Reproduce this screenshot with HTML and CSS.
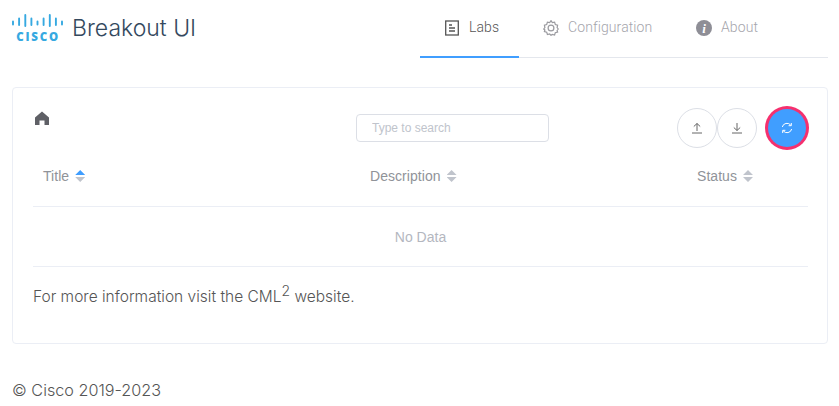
FILE: index.html
```html
<!DOCTYPE html>
<html lang="en">
<head>
    <meta charset="UTF-8">
    <title>Breakout UI</title>
    <link rel="stylesheet" href="styles.css">
</head>
<body>
    <header class="header">
        <div class="brand">
            <svg class="logo" viewBox="0 0 51 32" width="51" height="32">
                <path fill="none" stroke="#36a9e1" stroke-width="1.9" stroke-linecap="round" d="M1 7.500v3M7.100 4.500v6.500M13.300 1v11M19.400 4.500v6.500M25.500 7.500v3M31.600 4.500v6.500M37.800 1v11M43.900 4.500v6.500M50 7.500v3"/>
                <text x="26" y="26.500" class="logo-text" text-anchor="middle">CISCO</text>
            </svg>
            <span class="brand-name">Breakout UI</span>
        </div>
        <nav class="tabs">
            <a class="tab tab-active">
                <svg viewBox="0 0 16 16" width="16" height="16" fill="none" stroke="#555" stroke-width="1.3">
                    <rect x="1.700" y="1" width="12.600" height="14" />
                    <path d="M5 5h3M5 8h6M5 11h6"/>
                </svg>
                Labs
            </a>
            <a class="tab">
                <svg viewBox="0 0 16 16" width="16" height="16" fill="none" stroke="#9a9a9f" stroke-width="1.2">
                    <circle cx="8" cy="8" r="2.900"/>
                    <path d="M8 .7l1.300 2 2.300-.5.700 2.300 2.300.7-.5 2.300 1.200 1.500-1.200 1.500.5 1.500-2.300.7-.7 2.300-2.300-.5L8 15.300l-1.300-1.300-2.300.5-.7-2.300-2.300-.7.500-1.500L.7 9 1.900 7.500l-.5-2.300 2.300-.7.700-2.300 2.300.5z"/>
                </svg>
                Configuration
            </a>
            <a class="tab">
                <svg viewBox="0 0 16 16" width="16" height="16">
                    <circle cx="8" cy="8" r="8" fill="#8e8e96"/>
                    <text x="8" y="12.500" class="info-text" text-anchor="middle">i</text>
                </svg>
                About
            </a>
        </nav>
    </header>

    <main class="card">
        <div class="toolbar">
            <svg class="home" viewBox="0 0 16 14" width="16" height="14">
                <path fill="#5f6066" d="M8 .5 15 6.500V14h-4.500V9.500h-5V14H1V6.500z"/>
            </svg>
            <input class="search" type="text" placeholder="Type to search">
            <div class="actions">
                <button class="round-btn">
                    <svg viewBox="0 0 12 12" width="12" height="12" fill="none" stroke="#666" stroke-width="1">
                        <path d="M6 9V1.500M2.800 4.500 6 1.500l3.200 3M1 11h10"/>
                    </svg>
                </button>
                <button class="round-btn">
                    <svg viewBox="0 0 12 12" width="12" height="12" fill="none" stroke="#666" stroke-width="1">
                        <path d="M6 1v7.500M2.800 5.500 6 8.500l3.200-3M1 11h10"/>
                    </svg>
                </button>
                <button class="refresh-btn">
                    <svg viewBox="0 0 12 12" width="12" height="12" fill="none" stroke="#fff" stroke-width="1">
                        <path d="M1.300 5A4.800 4.800 0 0 1 9.800 3.200M10.700 7A4.800 4.800 0 0 1 2.200 8.800"/>
                        <path d="M10.300 1v2.700H7.600M1.700 11V8.300h2.700"/>
                    </svg>
                </button>
            </div>
        </div>

        <div class="table-head">
            <div class="th">Title <span class="sorter sorter-active"></span></div>
            <div class="th">Description <span class="sorter"></span></div>
            <div class="th">Status <span class="sorter"></span></div>
        </div>
        <div class="no-data">No Data</div>

        <p class="info">For more information visit the CML<sup>2</sup> website.</p>
    </main>

    <footer class="footer">© Cisco 2019-2023</footer>
</body>
</html>
```

FILE: styles.css
```css
body {
    margin: 0;
    padding: 0 11px 0 12px;
    font-family: "Inter", "Liberation Sans", sans-serif;
    font-weight: 300;
    background: #fff;
    color: #555;
}
.header {
    display: flex;
    justify-content: space-between;
    height: 58px;
}
.brand {
    display: flex;
    align-items: flex-start;
    gap: 9px;
    padding-top: 14px;
}
.logo-text {
    font-family: "Open Sans", "Liberation Sans", sans-serif;
    font-size: 11.500px;
    font-weight: 800;
    letter-spacing: 1.800px;
    fill: #36a9e1;
}
.info-text {
    font-family: "Liberation Serif", serif;
    font-size: 13px;
    font-weight: 700;
    font-style: italic;
    fill: #fff;
}
.brand-name {
    font-size: 23px;
    line-height: 28px;
    color: #34495e;
}
.tabs {
    display: flex;
    width: 408px;
    border-bottom: 1px solid #e4e7ed;
    box-sizing: border-box;
}
.tab {
    display: flex;
    align-items: flex-start;
    gap: 9px;
    box-sizing: border-box;
    width: 99px;
    height: 58px;
    padding: 19px 0 0 24px;
    font-family: "Roboto", sans-serif;
    font-size: 14px;
    letter-spacing: .1px;
    line-height: 17px;
    color: #a5a5ac;
    white-space: nowrap;
}
.tab svg {
    margin-top: 1px;
}
.tab-active {
    color: #555;
    border-bottom: 2px solid #409eff;
}
.tab:nth-child(2) {
    width: 153px;
}
.card {
    margin-top: 29px;
    height: 257px;
    box-sizing: border-box;
    padding: 20px 19px 0 20px;
    border: 1px solid #ebeef5;
    border-radius: 4px;
}
.toolbar {
    display: grid;
    grid-template-columns: 323px 193px 1fr;
    height: 40px;
}
.home {
    margin: 3px 0 0 1px;
}
.search {
    align-self: center;
    box-sizing: border-box;
    width: 193px;
    height: 28px;
    padding: 0 15px;
    border: 1px solid #dcdfe6;
    border-radius: 4px;
    font-family: "Liberation Sans", sans-serif;
    font-size: 12px;
}
.search::placeholder {
    color: #c0c4cc;
}
.actions {
    display: flex;
    justify-content: flex-end;
    align-items: center;
}
.round-btn {
    display: flex;
    align-items: center;
    justify-content: center;
    width: 40px;
    height: 40px;
    padding: 0;
    background: #fff;
    border: 1px solid #dcdfe6;
    border-radius: 50%;
}
.refresh-btn {
    display: flex;
    align-items: center;
    justify-content: center;
    width: 38px;
    height: 38px;
    margin: 0 2px 0 11px;
    padding: 0;
    background: #409eff;
    border: none;
    border-radius: 50%;
    box-shadow: 0 0 0 3px #f5306e;
}
.table-head {
    display: grid;
    grid-template-columns: 327px 327px 1fr;
    height: 58px;
    align-items: center;
    border-bottom: 1px solid #ebeef5;
}
.th {
    display: flex;
    align-items: center;
    gap: 6px;
    padding: 0 0 2px 10px;
    font-family: "Liberation Sans", sans-serif;
    font-weight: 400;
    font-size: 14px;
    letter-spacing: .05px;
    color: #909399;
}
.sorter {
    display: inline-block;
    width: 10px;
    height: 12px;
    background: linear-gradient(#c0c4cc, #c0c4cc);
    clip-path: polygon(50% 0, 100% 42%, 0 42%, 0 58%, 100% 58%, 50% 100%, 0 58%, 0 42%);
}
.sorter-active {
    background: linear-gradient(#409eff 50%, #c0c4cc 50%);
}
.no-data {
    height: 59px;
    display: flex;
    align-items: center;
    justify-content: center;
    border-bottom: 1px solid #ebeef5;
    font-family: "Liberation Sans", sans-serif;
    font-weight: 400;
    font-size: 14px;
    color: #b4b7bf;
}
.info {
    margin: 18px 0 0;
    font-size: 15.500px;
    line-height: 24px;
    color: #555;
}
.info sup {
    font-size: 14px;
    line-height: 0;
}
.footer {
    margin-top: 36px;
    font-size: 16.200px;
    line-height: 20px;
    color: #555;
}
```
